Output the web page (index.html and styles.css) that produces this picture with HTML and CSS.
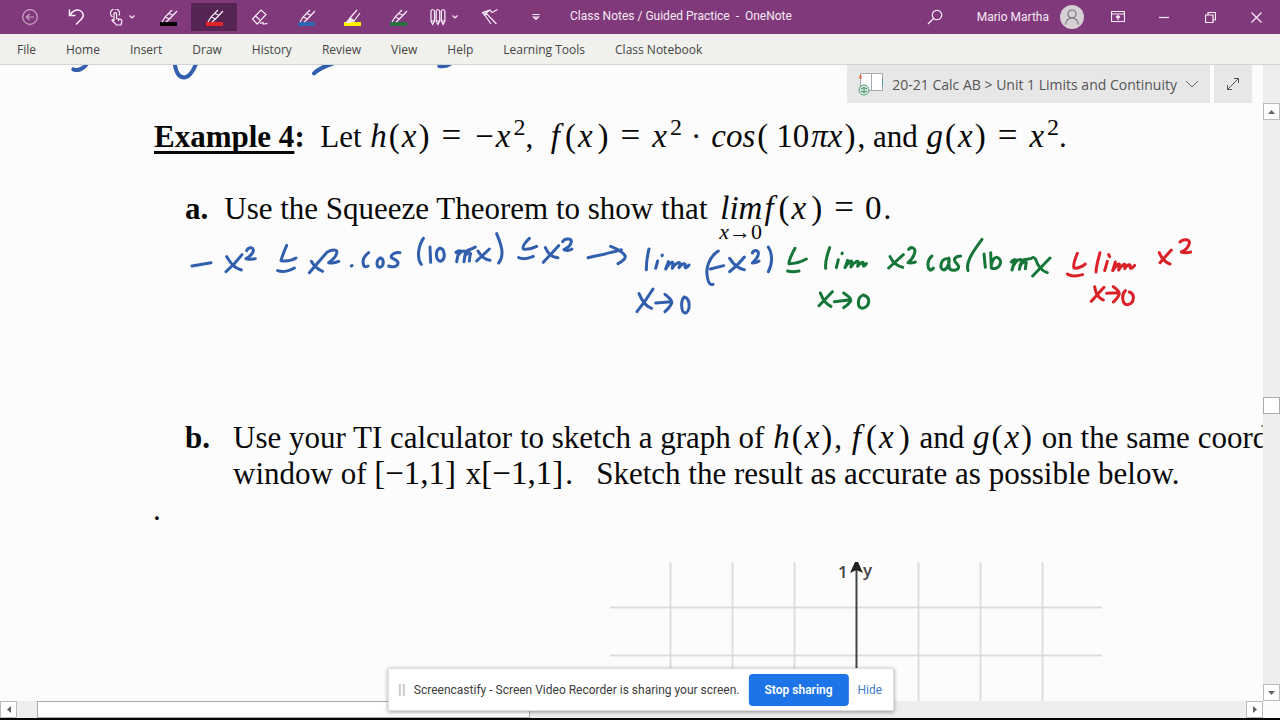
FILE: index.html
```html
<!DOCTYPE html>
<html lang="en">
<head>
<meta charset="utf-8">
<title>Class Notes / Guided Practice - OneNote</title>
<link rel="stylesheet" href="styles.css">
</head>
<body>
<svg class="defs" aria-hidden="true">
  <symbol id="pen" viewBox="0 0 18 18"><path d="M2 13 5 8 12 1M6 13l3.500-3L17 2M5 8l4.500 2M8.500 4.500 12.500 6"/></symbol>
  <symbol id="chev" viewBox="0 0 6 4"><path d="M.5.500 3 3 5.500.500"/></symbol>
</svg>
<div class="app">
  <header class="titlebar">
    <div class="tools">
      <button class="tool dim" aria-label="Back"><svg width="16" height="16"><circle cx="8" cy="8" r="7.300"/><path d="M12 8H4.500M7.500 5l-3 3 3 3"/></svg></button>
      <button class="tool" aria-label="Undo"><svg width="17" height="18"><path class="bold" d="M1.500 1.500v6h6M1.500 7.500C5 2 10 .5 13.500 3.500c3 3 1.500 6-.5 8l-5 5"/></svg></button>
      <button class="tool" aria-label="Touch mode"><svg width="13" height="17"><path d="M2.500 8A4.500 4.500 0 1 1 9 6.500M4 12V5a1.300 1.300 0 0 1 2.600 0v4.500l4 .8c1 .3 1.400 1 1.200 2L11 16H6.500L2 11.500c0-1.200 1-1.200 2-.3M8.500 10v2"/></svg><svg class="caret" width="6" height="4"><use href="#chev"/></svg></button>
      <button class="tool" aria-label="Black pen"><span class="pen black"><svg width="18" height="18"><use href="#pen"/></svg></span></button>
      <button class="tool active" aria-label="Red pen"><span class="pen red"><svg width="18" height="18"><use href="#pen"/></svg></span></button>
      <button class="tool" aria-label="Eraser"><svg width="18" height="18"><path d="M1.500 11 10 2l5 4.500-8.500 9.500H6zM4.500 8l5 4.500M9 15.500l3-1 .5 1.500 4-.5"/></svg></button>
      <button class="tool" aria-label="Blue pen"><span class="pen blue"><svg width="18" height="18"><use href="#pen"/></svg></span></button>
      <button class="tool" aria-label="Yellow highlighter"><span class="pen yellow"><svg width="18" height="18"><path d="M6 9 13 1M10 12l6-8M6 9l4 3"/><path class="solid" d="M6 9l4 3-5 1.500H2.500z"/></svg></span></button>
      <button class="tool" aria-label="Green pen"><span class="pen green"><svg width="18" height="18"><use href="#pen"/></svg></span></button>
      <button class="tool" aria-label="Pens"><svg width="16" height="18"><path d="M1 3q1.500-3 3.500 0v10L2.700 16.500 1 13zM6.200 3q1.500-3 3.500 0v10L8 16.500 6.200 13zM11.400 3q1.500-3 3.500 0v10l-1.800 3.500L11.400 13zM1 13h3.500M6.200 13h3.500M11.400 13h3.500"/></svg><svg class="caret" width="6" height="4"><use href="#chev"/></svg></button>
      <button class="tool" aria-label="Ink to shape"><svg width="18" height="18"><path d="M16.500 1.500 11 4.500 9 2 1.500 4.500 4 7.500 10 16M1.500 4.500 5 5 15.500 16M5 5 9 2M4 7.500 5 5"/></svg></button>
      <button class="tool" aria-label="Customize"><svg width="8" height="8"><path d="M.5 1.500h7M1.500 4 4 6.500 6.500 4z"/></svg></button>
    </div>
    <h1 class="title">Class Notes / Guided Practice&nbsp; -&nbsp; OneNote</h1>
    <button class="tool" aria-label="Search"><svg width="16" height="16"><circle cx="10" cy="6" r="4.700"/><path d="M6.500 9.500 1 15"/></svg></button>
    <button class="account">Mario Martha <span class="avatar"><svg width="16" height="18"><circle cx="8" cy="6" r="4"/><path d="M1.500 16.500q1-6.500 6.500-6.500t6.500 6.500"/></svg></span></button>
    <button class="tool" aria-label="Ribbon display"><svg width="14" height="12"><path d="M.5.500h13v10H.500zM.500 3h13M7 9V5M5 6.500l2-2 2 2"/></svg></button>
    <button class="tool" aria-label="Minimize"><svg width="10" height="10"><path d="M0 5.500h10"/></svg></button>
    <button class="tool" aria-label="Restore"><svg width="11" height="11"><path d="M.5 3h7.500v7.500H.500zM3 3V.500h7.500V8H8"/></svg></button>
    <button class="tool" aria-label="Close"><svg width="11" height="11"><path d="m.5.500 10 10m0-10-10 10"/></svg></button>
  </header>
  <nav class="menu">
    <button>File</button><button>Home</button><button>Insert</button><button>Draw</button><button>History</button><button>Review</button><button>View</button><button>Help</button><button>Learning Tools</button><button>Class Notebook</button>
  </nav>
  <div class="workspace">
    <main class="page">
      <p class="line example"><b><u>Example 4</u>:</b>&nbsp; Let <span class="m">h<i>(</i>x<i>)</i></span><span class="eq">=</span><span class="m"><i>−</i>x<sup>2</sup></span>,&nbsp; <span class="m f">f<i>(</i>x<i>)</i></span><span class="eq">=</span><span class="m">x<sup>2</sup></span><span class="dot">·</span><span class="m cos">cos<i>(</i></span><span class="m"><i>10</i>πx<i>)</i></span>, and <span class="m">g<i>(</i>x<i>)</i></span><span class="eq">=</span><span class="m">x<sup>2</sup></span>.</p>
      <div class="line part-a"><b>a.</b><p>Use the Squeeze Theorem to show that <span class="lim"><span class="m">lim</span><small><em>x</em>→0</small></span><span class="m f">f<i>(</i>x<i>)</i></span><span class="eq">=</span><span class="range">0</span>.</p></div>
      <div class="line part-b"><b>b.</b><p>Use your TI calculator to sketch a graph of <span class="m">h<i>(</i>x<i>)</i></span>, <span class="m f">f<i>(</i>x<i>)</i></span> and <span class="m">g<i>(</i>x<i>)</i></span> on the same coordinate<br>window of <span class="range">[−1,1]</span> x<span class="range">[−1,1]</span>.&nbsp;&nbsp; Sketch the result as accurate as possible below.</p></div>
      <p class="line stray">.</p>
      <svg class="graph" width="492" height="150">
        <path class="grid" d="M60.500 0v150M122.500 0v150M184.500 0v150M308.500 0v150M370.500 0v150M432.500 0v150M0 45.500h492M0 93.500h492"/>
        <path class="axis" d="M246.500 4v146"/><path d="M245 0h3l5 11-6.500-3-6.500 3z"/>
        <text x="228" y="16">1</text><text x="253" y="14">y</text>
      </svg>
      <svg class="ink" width="1262" height="300" viewBox="0 65 1262 300" role="img" aria-label="Handwritten limit inequality">
        <g transform="scale(.33333)" class="blue-ink thick"><path d="M220 208C235 214 250 206 262 190M524 190C528 220 540 234 556 232 570 228 580 212 588 192M942 220C956 206 972 200 1000 190M1318 198c12 2 22 0 32-6"/></g>
        <g transform="translate(180 230) scale(.33333)" class="blue-ink"><path d="M36 108 93 98M140 80C150 95 158 112 184 120M186 74C170 95 150 115 138 125M200 62C205 50 222 50 220 64 216 76 205 82 198 86 208 88 218 88 226 86M320 46C312 65 306 80 303 92 318 94 335 92 348 84M293 122C308 128 325 124 343 114M394 94C402 108 412 118 428 124M388 128C405 110 425 84 442 66 456 58 474 56 470 70 466 84 455 92 446 98 458 100 468 98 476 94M514 108l2-1M566 68C550 80 546 95 552 108 555 112 560 110 564 108M600 84C588 90 588 112 600 112 614 108 612 84 600 84M660 68C645 66 632 74 634 82 640 88 656 90 654 100 652 112 636 112 626 108"/></g>
        <g transform="translate(400 225) scale(.33333)" class="blue-ink"><path d="M70 40C54 65 50 100 64 118M90 66l2 46M118 70C104 80 108 112 124 108 138 100 134 68 118 70M168 82C174 76 180 76 186 80M176 80l-6 30M174 92C182 76 198 74 196 84l-4 26M198 80C206 72 216 74 226 66M194 94C204 80 216 80 210 92l-2 16M234 78C242 92 254 104 270 106M268 72 230 108M290 26C302 55 316 90 296 114M388 40C376 52 366 66 370 72 384 74 398 70 410 64M356 98C370 104 386 100 400 94M436 68C444 86 456 98 474 98M476 62 430 112M488 50C492 40 516 38 514 50 512 64 500 70 492 74 500 78 510 76 516 72M564 98C590 92 625 86 664 74M632 64C650 70 672 84 676 94 676 104 662 112 654 116"/></g>
        <g transform="translate(625 235) scale(.33333)">
          <path class="blue-ink" d="M72 42C66 65 64 85 64 104M98 78l-6 22M112 60l-1 2M130 80l-8 22C130 86 146 76 144 86l-2 14C150 86 164 78 166 86l-4 12C172 84 184 82 180 94 180 102 186 98 192 90M280 48C252 66 240 100 248 130 250 146 258 150 264 148M256 102l40-10M314 70C324 86 336 100 358 104M358 66C344 84 326 100 314 110M382 54C388 42 402 46 400 58 398 70 388 78 382 84 392 84 398 82 402 78M430 36C442 55 444 85 430 110M42 176C50 195 62 215 80 220M84 162C70 185 52 210 36 230M92 204l48-4M120 178C132 188 142 196 140 204 136 216 126 224 120 230M178 186C166 196 168 232 180 234 196 232 198 192 178 186"/>
          <path class="green-ink" d="M510 40C500 58 492 76 492 86 510 86 530 80 544 72M488 108C500 112 512 110 522 108M614 38C606 60 600 80 602 100M640 74l-6 24M652 54l-1 2M668 76l-8 22C668 84 682 72 680 82l-2 14C686 82 700 74 700 82l-2 12C708 80 718 78 714 88 714 96 720 94 724 86M586 174C592 190 604 208 618 214M622 170 582 212M628 200l48-6M656 174C668 182 682 192 676 200 670 208 664 214 656 218M714 180C696 188 696 218 712 220 734 216 740 186 714 180"/>
        </g>
        <g transform="translate(870 230) scale(.33333)">
          <path class="green-ink" d="M60 80C68 96 80 108 98 112M100 74 56 114M116 58C124 48 138 54 134 68 130 84 122 92 114 98 122 100 130 98 136 96M186 78C172 88 170 112 180 120 184 120 188 118 190 114M228 86C210 90 208 120 222 120 236 114 240 92 236 84 236 96 236 110 240 118 250 124 266 120 266 110 264 100 250 98 254 86 258 80 266 78 272 78M336 28C312 60 286 96 294 122M342 72l4 40M362 68l2 46C388 124 402 90 382 82 374 80 366 92 364 104M424 96C430 88 436 88 440 92M434 92l-8 28M432 104C442 86 458 84 454 96l-6 22M456 92C466 84 478 92 490 82M450 106C460 92 472 92 468 102l-2 14M496 86C502 105 512 122 532 128M540 84 488 138"/>
          <path class="red-ink" d="M622 70C614 90 608 104 612 114 624 116 636 110 646 102M592 132C606 142 622 138 638 134M690 68C684 90 678 110 678 126M712 94l-8 28M716 74l3 6M736 96l-8 26C738 106 750 96 748 106l-2 14C754 106 766 98 766 106l-2 10C772 102 784 100 780 112 782 118 788 114 794 106M868 68C874 84 884 96 900 102M904 60 870 98M930 36C938 26 962 26 958 40 954 54 944 62 934 66 946 70 954 68 962 66M674 170C676 188 686 206 700 210M702 172 664 214M710 190l36-2M730 170C746 180 752 190 744 200 740 208 734 212 730 216M766 182C752 196 758 224 772 224 794 220 796 192 778 186"/>
        </g>
      </svg>
      <div class="location">
        <button class="notebook"><svg width="26" height="24"><path fill="#fff" stroke="#a5a8ae" d="M2.500 1.500h11v17h-11zM13.500 1.500h11v17h-11z"/><path stroke="#d66a45" stroke-width="2" d="M2.500 3v4"/><path stroke="#4b9aa5" d="M24.500 7v7"/><circle cx="6" cy="18" r="5" fill="#d7eadd" stroke="#5ba17a"/><path stroke="#39885c" d="M3 17q3-3 6 0M9 19q-3 3-6 0M6 16v4"/></svg><span>20-21 Calc AB &gt; Unit 1 Limits and Continuity</span><svg width="14" height="9"><path stroke="#666" d="m1 1 6 6 6-6"/></svg></button>
        <button class="expand" aria-label="Full page view"><svg width="14" height="14"><path stroke="#555" d="M1.500 12.500l11-11M8 1.500h4.500V6M1.500 8v4.500H6"/></svg></button>
      </div>
    </main>
    <div class="vbar">
      <button aria-label="Scroll up"><svg width="7" height="4"><path d="M0 4 3.500 0 7 4z"/></svg></button>
      <div class="before"></div><div class="thumb"></div><div class="after"></div>
      <button aria-label="Scroll down"><svg width="7" height="4"><path d="M0 0h7L3.500 4z"/></svg></button>
    </div>
    <div class="hbar">
      <button aria-label="Scroll left"><svg width="4" height="7"><path d="M4 0v7L0 3.500z"/></svg></button>
      <div class="lead"></div><div class="thumb"></div><div class="after"></div>
      <button aria-label="Scroll right"><svg width="4" height="7"><path d="M0 0v7l4-3.500z"/></svg></button>
    </div>
  </div>
  <aside class="share"><span class="grip"></span><span>Screencastify - Screen Video Recorder is sharing your screen.</span><button class="stop">Stop sharing</button><a href="#">Hide</a></aside>
</div>
</body>
</html>
```
FILE: styles.css
```css
* { box-sizing: border-box; }
body { margin: 0; font-family: "Open Sans", "Noto Sans", sans-serif; font-size: 12px; }
button { font: inherit; color: inherit; background: none; border: 0; padding: 0; margin: 0; }
p { margin: 0; }
svg { fill: none; flex: none; }
.defs { position: absolute; width: 0; height: 0; }
.app { height: 100vh; display: flex; flex-direction: column; border-bottom: 2px solid #050505; background: #fcfcfc; }

.titlebar { display: flex; align-items: stretch; height: 34px; flex: none; background: #80397b; color: #f6e9f5; padding: 0 1px 0 7px; font-family: Roboto, "Open Sans", sans-serif; }
.titlebar svg { stroke: #fbeefa; stroke-width: 1.2; }
.tools { display: flex; }
.tool { width: 46px; display: flex; align-items: center; justify-content: center; gap: 6px; }
.tool .bold { stroke-width: 1.5; }
.dim { opacity: .6; }
.active { background: #552452; margin: 3px 0; }
.pen { display: block; border-bottom: 4px solid; width: 17px; height: 17px; }
.pen svg { display: block; }
.pen .solid { fill: #f6e3f4; }
.pen.black { border-color: #000; }
.pen.red { border-color: #de2424; }
.pen.blue { border-color: #2f67b4; }
.pen.yellow { border-color: #fff200; }
.pen.green { border-color: #24713f; }
.title { margin: 0 auto 0 11px; font-size: 12px; font-weight: 400; line-height: 32px; white-space: nowrap; }
.account { display: flex; align-items: center; gap: 11px; margin: 0 11px 0 19px; white-space: nowrap; }
.avatar { width: 24px; height: 24px; border-radius: 50%; background: #d6d0d4; display: grid; place-items: center; }
.avatar svg { stroke: #77727a; }

.menu { display: flex; flex: none; height: 31px; gap: 30px; padding-left: 17px; background: #f0f0ec; border-bottom: 1px solid #d4d4d2; color: #444; font-size: 12px; }

.workspace { flex: 1; min-height: 0; display: grid; grid-template-columns: 1fr 17px; grid-template-rows: 1fr 17px; }
.page { position: relative; overflow: hidden; min-width: 0; font-family: "Liberation Serif", serif; font-size: 31px; color: #080808; padding-top: 54px; }
.line { line-height: 36px; white-space: nowrap; }
.example { padding-left: 154px; }
.part-a, .part-b { display: flex; padding-left: 185px; }
.part-a { margin-top: 36px; gap: 16px; height: 50px; }
.part-b { margin-top: 179px; gap: 23px; }
.stray { padding-left: 153px; }
u { text-decoration-thickness: 3px; text-underline-offset: 4px; text-decoration-skip-ink: none; }
.m, .range { font-size: 33px; line-height: 30px; }
.range { margin-right: 2px; }
.m { font-style: italic; margin-left: 1px; }
.m i { font-style: normal; margin: 0 2px; }
.f { margin-left: 2px; }
.f i { margin-left: 5px; }
.m sup { font-style: normal; font-size: 24px; line-height: 0; margin-left: 3px; }
.eq { font-size: 35px; line-height: 30px; margin: 0 11px 0 10px; }
.dot { margin: 0 9px; }
.cos { margin-right: 3px; }
.lim { display: inline-flex; flex-direction: column; margin-left: 4px; }
.lim small { font-size: 22px; line-height: 18px; }
.graph { display: block; margin: 34px 0 0 610px; }
.graph .grid { stroke: #dedede; stroke-width: 2; }
.graph .axis { stroke: #444; stroke-width: 2; }
.graph path:not(.grid):not(.axis) { fill: #222; }
.graph text { font: 600 17px "Open Sans", sans-serif; fill: #444; }
.ink { position: absolute; left: 0; top: 0; stroke-width: 9; stroke-linecap: round; stroke-linejoin: round; }
.thick { stroke-width: 12; }
.blue-ink { stroke: #315fae; }
.green-ink { stroke: #157638; }
.red-ink { stroke: #db2028; }

.location { position: absolute; top: 0; right: 11px; height: 38px; display: flex; gap: 4px; font-family: "Open Sans", sans-serif; font-size: 14px; color: #555; }
.location button { background: #e7e7e7; display: flex; align-items: center; }
.notebook { padding: 0 11px; gap: 8px; }
.expand { width: 38px; justify-content: center; }

.vbar { display: flex; flex-direction: column; background: #eee; padding-top: 38px; }
.vbar button, .hbar button { width: 17px; height: 17px; flex: none; background: #fff; border: 1px solid #bbb; display: grid; place-items: center; }
.vbar path, .hbar path { fill: #666; }
.thumb { background: #fff; border: 1px solid #aaa; }
.vbar .thumb { height: 17px; }
.vbar .before { flex: 277; }
.vbar .after { flex: 271; }
.hbar { display: flex; background: #eee; }
.hbar .lead { width: 20px; }
.hbar .thumb { flex: 492; }
.hbar .after { flex: 717; }

.share { position: absolute; bottom: 9px; left: 50%; transform: translateX(-50%); margin-left: 1px; display: flex; align-items: center; gap: 9px; height: 43px; padding: 0 11px 0 10px; background: #fff; border: 1px solid #ddd; box-shadow: 0 1px 4px #0006; color: #3c3c3c; white-space: nowrap; font-family: Roboto, "Open Sans", sans-serif; }
.grip { width: 6px; height: 12px; border: solid #ccc; border-width: 0 2px; }
.stop { background: #1d74e8; color: #fff; font-weight: 600; border-radius: 4px; padding: 0 16px; height: 32px; }
.share a { color: #447ecb; text-decoration: none; }
```
